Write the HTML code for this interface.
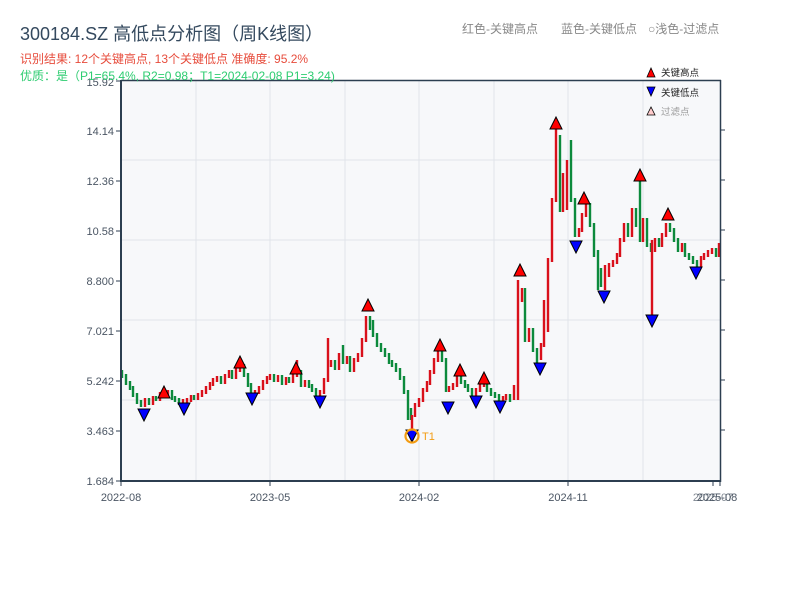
<!DOCTYPE html>
<html><head><meta charset="utf-8"><style>
body{margin:0;background:#fff;width:800px;height:600px;overflow:hidden;}
</style></head><body>
<svg width="800" height="600" xmlns="http://www.w3.org/2000/svg" style="position:absolute;left:0;top:0;font-family:'Liberation Sans','Noto Sans CJK SC',sans-serif">
<rect x="121" y="80" width="599" height="401" fill="#f7f8fa"/>
<g stroke="#e1e4ea" stroke-width="1">
<line x1="121" x2="720" y1="160" y2="160"/><line x1="121" x2="720" y1="240" y2="240"/><line x1="121" x2="720" y1="320" y2="320"/><line x1="121" x2="720" y1="400" y2="400"/>
<line x1="196" x2="196" y1="80" y2="481"/><line x1="270" x2="270" y1="80" y2="481"/><line x1="345" x2="345" y1="80" y2="481"/><line x1="419" x2="419" y1="80" y2="481"/><line x1="494" x2="494" y1="80" y2="481"/><line x1="568" x2="568" y1="80" y2="481"/><line x1="643" x2="643" y1="80" y2="481"/>
</g>
<path stroke="#0c8a3c" stroke-width="2.4" fill="none" d="M122 370V378M126 374V385M130 381V390M133 386V397M137 393V404M141 400V407M149 398V405M156 396V401M164 392V398M172 390V400M175 396V402M179 398V405M194 395V400M221 376V384M232 370V379M244 364V377M248 373V387M251 383V397M274 374V382M282 375V385M289 377V383M301 370V387M309 380V388M312 384V392M316 388V398M335 360V370M343 345V364M350 356V372M370 316V330M373 320V337M377 333V347M381 343V352M385 348V357M389 353V364M392 360V367M396 363V372M400 368V380M404 376V394M408 390V420M411 408V420M442 350V362M446 358V392M461 376V384M465 380V388M468 384V392M472 388V396M487 380V392M491 388V396M495 392V398M499 394V402M510 394V402M525 288V342M533 328V352M537 348V365M560 135V212M571 140V202M575 198V237M590 203V227M594 223V257M598 250V290M601 268V287M628 223V237M636 208V227M640 180V242M647 218V247M651 243V252M659 238V247M670 223V232M674 228V242M678 238V252M685 243V257M689 253V260M693 256V264M697 260V267M716 248V257"/>
<path stroke="#d9101b" stroke-width="2.4" fill="none" d="M145 398V407M153 396V405M160 392V401M168 390V398M183 399V405M187 398V403M191 395V402M198 393V400M202 390V397M206 386V394M210 382V390M213 378V386M217 376V382M225 374V384M229 370V378M236 368V379M240 364V372M255 390V397M259 386V394M263 380V390M267 376V384M270 374V380M278 375V382M286 377V385M293 373V383M297 360V377M305 380V387M320 390V398M324 378V394M328 338V382M331 360V367M339 353V370M347 356V364M354 358V372M358 353V362M362 338V357M366 316V342M415 403V417M419 398V407M423 388V402M427 381V392M430 370V385M434 358V374M438 350V362M449 386V392M453 383V390M457 376V387M476 388V396M480 383V392M484 380V387M503 396V402M506 394V400M514 385V400M518 280V400M522 288V302M529 328V342M541 343V360M544 300V347M548 258V332M552 198V262M556 125V202M563 173V212M567 160V210M579 228V237M582 213V232M586 203V217M605 265V290M609 263V277M613 260V267M617 253V264M620 238V257M624 223V242M632 208V237M643 218V242M652 240V320M655 238V252M662 233V247M666 223V237M682 243V252M701 256V267M704 253V260M708 250V257M712 248V254M719 243V257M412 415V430"/>
<g stroke="#2c3e50" fill="none">
<line x1="121" x2="721" y1="80.5" y2="80.5" stroke-width="1.5"/>
<line x1="121" x2="121" y1="80" y2="482" stroke-width="2"/>
<line x1="120" x2="721" y1="481" y2="481" stroke-width="2"/>
<line x1="720.5" x2="720.5" y1="80" y2="482" stroke-width="1.5"/>
<path d="M116 81H121M116 131H121M116 181H121M116 231H121M116 281H121M116 331H121M116 381H121M116 431H121M116 481H121" stroke-width="1"/>
<path d="M720 130H725M720 180H725M720 230H725M720 280H725M720 330H725M720 380H725M720 430H725" stroke-width="1"/>
<path d="M121 481V486M270 481V486M419 481V486M568 481V486M713 481V486M720 481V486" stroke-width="1"/>
</g>
<g font-size="11" fill="#4a5563" text-anchor="end">
<text x="114" y="86">15.92</text><text x="114" y="135">14.14</text><text x="114" y="185">12.36</text><text x="114" y="235">10.58</text><text x="114" y="285">8.800</text><text x="114" y="335">7.021</text><text x="114" y="385">5.242</text><text x="114" y="435">3.463</text><text x="114" y="485">1.684</text>
</g>
<g font-size="11" fill="#4a5563" text-anchor="middle">
<text x="121" y="501">2022-08</text><text x="270" y="501">2023-05</text><text x="419" y="501">2024-02</text><text x="568" y="501">2024-11</text><text x="717" y="501">2025-08</text><text x="713" y="501" opacity="0.7">2025-07</text>
</g>
<text x="20" y="40" font-size="18" fill="#34495e">300184.SZ 高低点分析图（周K线图）</text>
<text x="20" y="63" font-size="12" fill="#e74c3c">识别结果: 12个关键高点, 13个关键低点  准确度: 95.2%</text>
<text x="20" y="80" font-size="12" fill="#2ecc71">优质：是（P1=65.4%, R2=0.98；T1=2024-02-08 P1=3.24)</text>
<text x="462" y="33" font-size="12" fill="#888">红色-关键高点</text>
<text x="561" y="33" font-size="12" fill="#888">蓝色-关键低点</text>
<text x="648" y="33" font-size="12" fill="#888">○浅色-过滤点</text>
<path d="M647 77L651 68L655 77Z" fill="#f00" stroke="#000" stroke-width="0.8"/>
<text x="661" y="76" font-size="9.5" fill="#222">关键高点</text>
<path d="M647 87L655 87L651 96Z" fill="#00f" stroke="#000" stroke-width="0.8"/>
<text x="661" y="96" font-size="9.5" fill="#222">关键低点</text>
<path d="M647 115L651 107L655 115Z" fill="#fcc" stroke="#000" stroke-width="0.8"/>
<text x="661" y="115" font-size="9.5" fill="#999">过滤点</text>
<g fill="#f00" stroke="#000" stroke-width="1">
<path d="M158 398L164 386L170 398Z"/><path d="M234 368L240 356L246 368Z"/><path d="M290 374L296 362L302 374Z"/><path d="M362 311L368 299L374 311Z"/><path d="M434 351L440 339L446 351Z"/><path d="M454 376L460 364L466 376Z"/><path d="M478 384L484 372L490 384Z"/><path d="M514 276L520 264L526 276Z"/><path d="M550 129L556 117L562 129Z"/><path d="M578 204L584 192L590 204Z"/><path d="M634 181L640 169L646 181Z"/><path d="M662 220L668 208L674 220Z"/>
</g>
<g fill="#00f" stroke="#000" stroke-width="1">
<path d="M138 409L150 409L144 421Z"/><path d="M178 403L190 403L184 415Z"/><path d="M246 393L258 393L252 405Z"/><path d="M314 396L326 396L320 408Z"/><path d="M406 430L418 430L412 442Z"/><path d="M442 402L454 402L448 414Z"/><path d="M470 396L482 396L476 408Z"/><path d="M494 401L506 401L500 413Z"/><path d="M534 363L546 363L540 375Z"/><path d="M570 241L582 241L576 253Z"/><path d="M598 291L610 291L604 303Z"/><path d="M646 315L658 315L652 327Z"/><path d="M690 267L702 267L696 279Z"/>
</g>
<circle cx="412" cy="436" r="6.5" fill="none" stroke="#f39c12" stroke-width="2.2"/>
<text x="422" y="440" font-size="11" fill="#f39c12">T1</text>
</svg>
</body></html>
